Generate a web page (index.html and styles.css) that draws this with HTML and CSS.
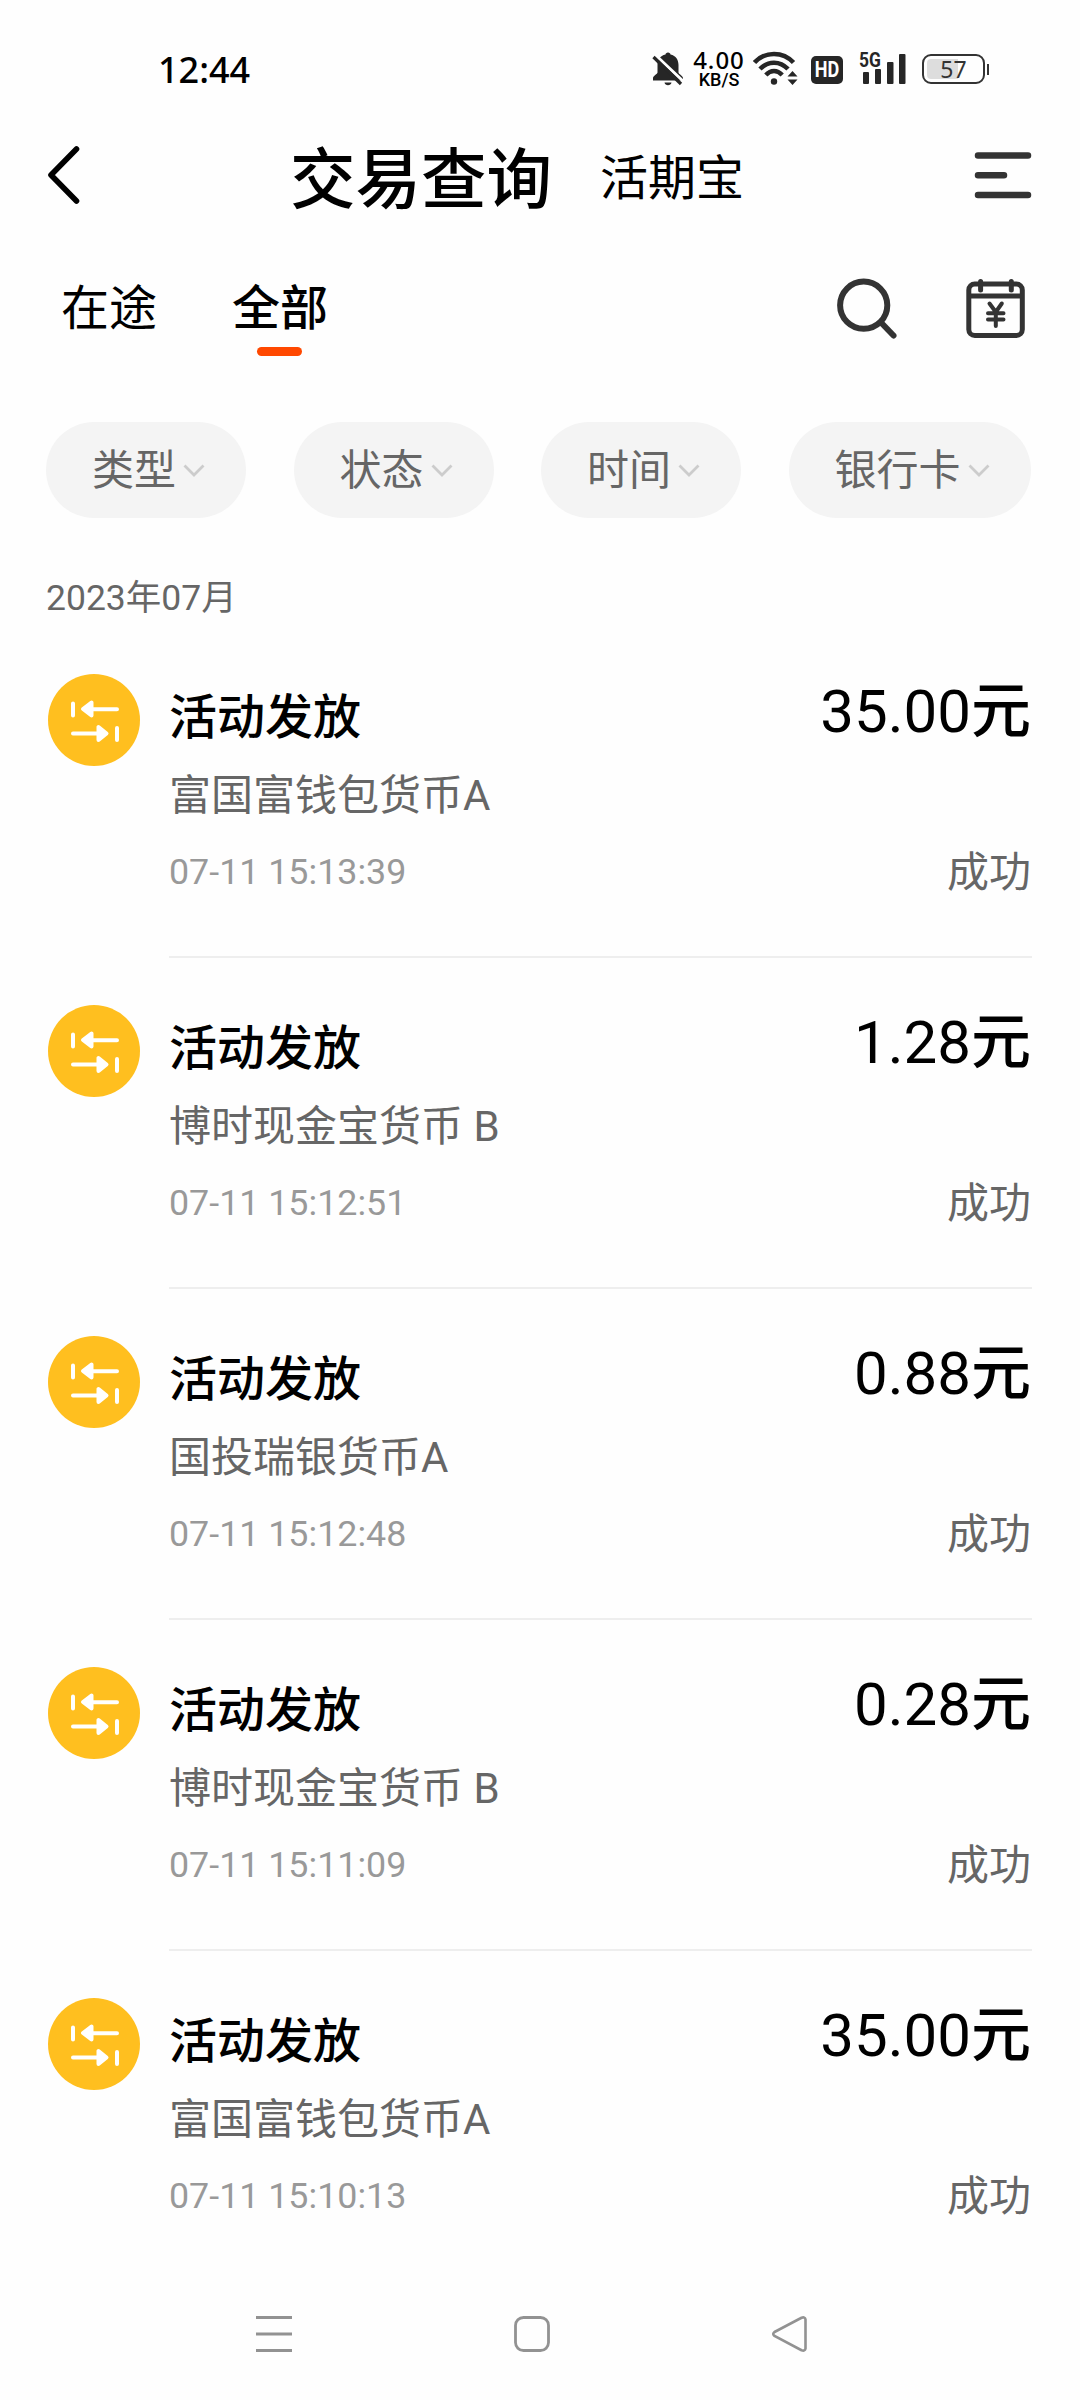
FILE: index.html
```html
<!DOCTYPE html>
<html lang="zh-CN">
<head>
<meta charset="utf-8">
<title>交易查询</title>
<link rel="stylesheet" href="styles.css">
</head>
<body>
<svg class="defs" aria-hidden="true">
  <symbol id="chevron" viewBox="0 0 22 14"><path d="M1.500 1.500 11 11 20.500 1.500" fill="none" stroke="#ccc" stroke-width="2.800"/></symbol>
  <symbol id="transfer" viewBox="0 0 92 92">
    <circle cx="46" cy="46" r="46" fill="#ffbf1f"/>
    <g stroke="#fff" stroke-width="4" stroke-linecap="round" stroke-linejoin="round" fill="#fff">
      <path d="M25 29.500v12M69 35.300H44M43.500 28.500v13L35 35z"/>
      <path d="M25 59.500h25M50.500 53v13l8-6.500zM69 54v12"/>
    </g>
  </symbol>
</svg>
<div class="screen">
  <div class="statusbar">
    <span class="clock">12:44</span>
    <div class="indicators">
      <svg class="bell" width="32" height="36" viewBox="0 0 32 36">
        <path d="M16 1.500c1.500 0 2.500 1 2.500 2 5.500 1.300 8 5.500 8 10.500v7.500c0 1.500 4.500 3.500 4.500 5.500v2.500H1V27c0-2 4.500-4 4.500-5.500V14c0-5 2.500-9.200 8-10.500 0-1 1-2 2.500-2zM12.500 31.500h7c-.5 3.500-6.500 3.500-7 0z" fill="#262626"/>
        <path d="M4 4.500 32 31" stroke="#fff" stroke-width="3"/>
        <path d="M1.500 6 29 33" stroke="#262626" stroke-width="3.200"/>
      </svg>
      <div class="speed"><span class="speed-value">4.00</span><span class="speed-unit">KB/S</span></div>
      <svg class="wifi" width="46" height="36" viewBox="0 0 46 36">
        <g fill="none" stroke="#262626" stroke-width="4.500">
          <path d="M1.500 11.500C12 0 30 0 40.500 11.500"/><path d="M7 18c8-8.500 20-8.500 28 0"/><path d="M12.800 24c5-5.300 11.400-5.300 16.400 0"/>
        </g>
        <circle cx="21" cy="30.500" r="3.200" fill="#262626"/>
        <path d="M34.500 25.500 39.500 20l5 5.500zM34.500 28.500l5 5.500 5-5.500z" fill="#262626"/>
      </svg>
      <div class="hd"><span class="hd-text">HD</span></div>
      <div class="signal">
        <span class="network">5G</span>
        <svg width="44" height="30" viewBox="0 0 44 30" fill="#262626">
          <rect x="0" y="18" width="6" height="12" rx="1"/><rect x="12" y="15" width="6" height="15" rx="1"/><rect x="24" y="8" width="6.500" height="22" rx="1"/><rect x="36" y="0" width="6.500" height="30" rx="1"/>
        </svg>
      </div>
      <div class="battery"><span class="battery-body"><span class="battery-level">57</span></span><span class="battery-cap"></span></div>
    </div>
  </div>

  <header class="header">
    <svg class="back" width="34" height="60" viewBox="0 0 34 60"><path d="M29.500 4 4 30l25.500 26" fill="none" stroke="#000" stroke-width="5.600" stroke-linecap="round" stroke-linejoin="round"/></svg>
    <h1 class="title">交易查询</h1>
    <span class="subtitle">活期宝</span>
    <svg class="menu" width="58" height="48" viewBox="0 0 58 48"><path d="M4 4.500h50M4 24.200h26M4 44h50" stroke="#333" stroke-width="6.500" stroke-linecap="round"/></svg>
  </header>

  <nav class="tabs">
    <a class="tab">在途</a>
    <a class="tab active">全部</a>
    <svg class="search" width="64" height="64" viewBox="0 0 64 64" fill="none" stroke="#333"><circle cx="28.700" cy="29.200" r="23.600" stroke-width="6"/><path d="M46 46.500 58.500 59.500" stroke-width="6" stroke-linecap="round"/></svg>
    <svg class="calendar" width="60" height="62" viewBox="0 0 60 62" fill="none" stroke="#333" stroke-width="5">
      <rect x="2.800" y="7" width="53.500" height="51.500" rx="6"/><path d="M3 19h53"/><path d="M14.600 4.500V13M45.300 4.500V13" stroke-linecap="round"/>
      <path d="M23.500 26.500 29.800 35l6-8.500M29.800 35v14M22 36.200h15.500M22 42.500h15.500" stroke-width="4" stroke-linecap="round"/>
    </svg>
  </nav>

  <div class="filters">
    <div class="chip"><span class="chip-text">类型</span><svg class="chevron"><use href="#chevron"/></svg></div>
    <div class="chip"><span class="chip-text">状态</span><svg class="chevron"><use href="#chevron"/></svg></div>
    <div class="chip"><span class="chip-text">时间</span><svg class="chevron"><use href="#chevron"/></svg></div>
    <div class="chip"><span class="chip-text">银行卡</span><svg class="chevron"><use href="#chevron"/></svg></div>
  </div>

  <div class="month">2023年07月</div>

  <main class="list">
    <article class="item">
      <svg class="badge"><use href="#transfer"/></svg>
      <div class="info"><h2 class="name">活动发放</h2><p class="fund">富国富钱包货币A</p><time class="time">07-11 15:13:39</time></div>
      <div class="result"><span class="amount">35.00<b class="unit">元</b></span><span class="state">成功</span></div>
    </article>
    <article class="item">
      <svg class="badge"><use href="#transfer"/></svg>
      <div class="info"><h2 class="name">活动发放</h2><p class="fund">博时现金宝货币 B</p><time class="time">07-11 15:12:51</time></div>
      <div class="result"><span class="amount">1.28<b class="unit">元</b></span><span class="state">成功</span></div>
    </article>
    <article class="item">
      <svg class="badge"><use href="#transfer"/></svg>
      <div class="info"><h2 class="name">活动发放</h2><p class="fund">国投瑞银货币A</p><time class="time">07-11 15:12:48</time></div>
      <div class="result"><span class="amount">0.88<b class="unit">元</b></span><span class="state">成功</span></div>
    </article>
    <article class="item">
      <svg class="badge"><use href="#transfer"/></svg>
      <div class="info"><h2 class="name">活动发放</h2><p class="fund">博时现金宝货币 B</p><time class="time">07-11 15:11:09</time></div>
      <div class="result"><span class="amount">0.28<b class="unit">元</b></span><span class="state">成功</span></div>
    </article>
    <article class="item">
      <svg class="badge"><use href="#transfer"/></svg>
      <div class="info"><h2 class="name">活动发放</h2><p class="fund">富国富钱包货币A</p><time class="time">07-11 15:10:13</time></div>
      <div class="result"><span class="amount">35.00<b class="unit">元</b></span><span class="state">成功</span></div>
    </article>
  </main>

  <footer class="navbar">
    <svg width="36" height="36" viewBox="0 0 36 36"><path d="M0 1.500h36M0 18h36M0 34.500h36" stroke="#929292" stroke-width="3"/></svg>
    <svg width="36" height="36" viewBox="0 0 36 36"><rect x="1.500" y="1.500" width="33" height="33" rx="8" fill="none" stroke="#929292" stroke-width="2.800"/></svg>
    <svg width="36" height="36" viewBox="0 0 36 36"><path d="M2.500 16 29.500 1.800Q33 .5 33.500 3.500V32.500Q33 35.500 29.500 34.200L2.500 20Q0 18 2.500 16z" fill="none" stroke="#929292" stroke-width="2.600"/></svg>
  </footer>
</div>
</body>
</html>
```
FILE: styles.css
```css
* { box-sizing: border-box; }
body { margin: 0; background: #fefefe; color: #000; font-family: Roboto, "Noto Sans CJK SC", sans-serif; }
h1, h2, p { margin: 0; }
svg { display: block; flex: none; }
.defs { position: absolute; width: 0; height: 0; }
.screen { width: 1080px; height: 2400px; display: flex; flex-direction: column; overflow: hidden; }
.screen > * { flex-shrink: 0; }

.statusbar { height: 110px; padding: 0 91px 0 158px; display: flex; justify-content: space-between; }
.clock { margin-top: 49px; font: 500 36px/42px "Noto Sans", sans-serif; }
.indicators { display: flex; margin-top: 51px; height: 36px; }
.speed { width: 52px; margin: -1px 0 0 9px; display: flex; flex-direction: column; align-items: center; font-family: "Noto Sans", sans-serif; font-weight: 500; }
.speed-value { font-size: 24px; line-height: 20px; letter-spacing: 1px; }
.speed-unit { font-family: Roboto, sans-serif; font-size: 18px; line-height: 20px; }
.wifi { margin-left: 8px; }
.hd { width: 32px; height: 28px; margin: 5px 0 0 12px; border-radius: 5px; background: #262626; display: flex; justify-content: center; }
.hd-text { color: #fff; font: 700 22px/28px Roboto, sans-serif; transform: scaleX(.82); }
.signal { position: relative; width: 44px; margin: 3px 0 0 20px; }
.network { position: absolute; left: -4px; top: -3px; color: #262626; font: 700 20px/18px Roboto, sans-serif; transform: scaleX(.87); transform-origin: left; }
.battery { display: flex; align-items: center; gap: 2px; height: 30px; margin: 3px 0 0 15px; }
.battery-body { width: 63px; height: 30px; padding: 3px; border: 2px solid #333; border-radius: 9px; }
.battery-level { display: block; height: 20px; border-radius: 4px; background: linear-gradient(90deg, #ddd 31px, transparent 31px); color: #333; font: 400 23px/21px "Noto Sans", sans-serif; text-align: center; }
.battery-cap { width: 2px; height: 11px; background: #333; }

.header { height: 130px; padding: 0 48px 0 47px; display: flex; align-items: center; }
.title { margin-left: 209px; padding-top: 12px; font-size: 65.5px; line-height: 80px; font-weight: 500; }
.subtitle { margin-left: 48px; padding-top: 7px; font-size: 48px; line-height: 60px; }
.menu { margin-left: auto; }

.tabs { height: 182px; padding: 39px 54px 0 61px; display: flex; align-items: flex-start; }
.tab { position: relative; width: 96px; margin-right: 75px; font-size: 48px; line-height: 60px; }
.active { font-weight: 500; }
.active::after { content: ""; position: absolute; left: 25px; top: 68px; width: 45px; height: 9px; border-radius: 4.5px; background: #ff4800; }
.search { margin: -3px 0 0 auto; }
.calendar { margin: -2px 0 0 67px; }

.filters { padding: 0 48px 0 46px; display: flex; gap: 47.5px; }
.chip { height: 96px; padding: 0 41px 0 46px; display: flex; align-items: center; gap: 7px; border-radius: 48px; background: #f4f4f4; color: #666; font-size: 42px; }
.chip-text { line-height: 50px; padding-top: 2px; }
.chevron { width: 22px; height: 14px; margin-top: 2px; }

.month { height: 134px; padding: 55px 46px 0; color: #666; font-size: 35.5px; line-height: 50px; }

.list { height: 1616px; padding: 0 48px; }
.item { height: 331px; display: flex; }
.item:last-child { height: 292px; }
.badge { width: 92px; height: 92px; margin-top: 22px; }
.info, .result { height: 306px; border-bottom: 2px solid #eee; display: flex; flex-direction: column; }
.info { flex: 1; margin-left: 29px; padding-top: 36px; }
.item:last-child .info, .item:last-child .result { height: 292px; border-bottom: 0; }
.name { font-size: 48px; line-height: 60px; font-weight: 500; }
.fund { margin-top: 23px; font-size: 42px; line-height: 50px; color: #666; }
.time { margin-top: 29px; font-size: 35.8px; line-height: 44px; color: #999; }
.result { align-items: flex-end; padding: 30px 1px 0 0; }
.amount { font-size: 60px; line-height: 60px; }
.unit { font-weight: 500; }
.state { margin-top: 106px; font-size: 42px; line-height: 50px; color: #666; }

.navbar { height: 132px; padding: 48px 272px 0 256px; display: flex; justify-content: space-between; }
```
